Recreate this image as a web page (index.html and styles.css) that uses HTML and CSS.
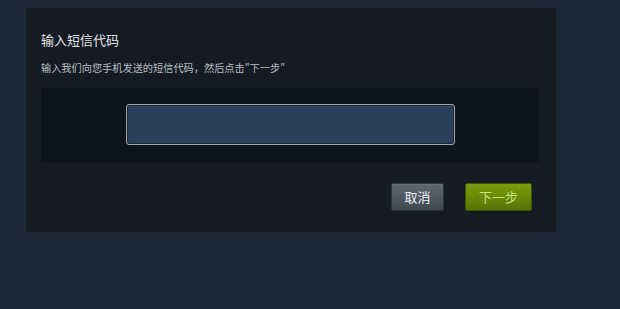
FILE: index.html
```html
<!DOCTYPE html>
<html lang="zh-CN">
<head>
<meta charset="utf-8">
<title>输入短信代码</title>
<link rel="stylesheet" href="styles.css">
</head>
<body>
<div class="page">
  <div class="dialog">
    <div class="title">输入短信代码</div>
    <div class="desc">输入我们向您手机发送的短信代码，然后点击"下一步"</div>
    <div class="inset">
      <input class="code-input" type="text" aria-label="短信代码">
    </div>
    <div class="actions">
      <button class="btn btn-cancel">取消</button>
      <button class="btn btn-next">下一步</button>
    </div>
  </div>
</div>
</body>
</html>
```

FILE: styles.css
```css
html, body {
  margin: 0;
  padding: 0;
  background: #1b2838;
}
body {
  width: 620px;
  height: 309px;
  overflow: hidden;
  font-family: "Noto Sans CJK SC", "Noto Sans", sans-serif;
}
.page {
  padding: 8px 0 0 26px;
}
.dialog {
  box-sizing: border-box;
  width: 530px;
  height: 224px;
  background: #161b23;
  padding: 23px 17px 0 15px;
  display: flex;
  flex-direction: column;
}
.title {
  color: #e4e6e8;
  font-size: 13px;
  line-height: 18px;
}
.desc {
  margin-top: 12px;
  color: #b8bec4;
  font-size: 10.2px;
  line-height: 14px;
}
.inset {
  margin-top: 13px;
  height: 74px;
  box-sizing: border-box;
  background: #0e141b;
  display: flex;
  justify-content: center;
  padding-top: 16px;
}
.code-input {
  box-sizing: border-box;
  width: 329px;
  height: 41px;
  margin: 0;
  background: #2a3f5a;
  border: 1px solid #a2a6ab;
  border-radius: 3px;
  box-shadow: inset 0 0 0 1px #1e2a38;
  outline: none;
  color: #fff;
  font-size: 14px;
  padding: 0 8px;
}
.actions {
  margin-top: 21px;
  margin-right: 7px;
  display: flex;
  justify-content: flex-end;
  gap: 21px;
}
.btn {
  box-sizing: border-box;
  height: 28px;
  margin: 0;
  border-radius: 2px;
  font-family: "Noto Sans CJK SC", "Noto Sans", sans-serif;
  font-size: 13px;
  line-height: 26px;
  padding: 0;
  cursor: pointer;
}
.btn-cancel {
  width: 53px;
  color: #f0f2f4;
  background: linear-gradient(to bottom, #5e6670 0%, #404851 100%);
  border: 1px solid #2c333b;
  box-shadow: inset 0 1px 0 rgba(255,255,255,0.08);
}
.btn-next {
  width: 67px;
  color: #c9e57a;
  background: linear-gradient(to bottom, #7a9e0b 0%, #567406 100%);
  border: 1px solid #3e5505;
}
```
